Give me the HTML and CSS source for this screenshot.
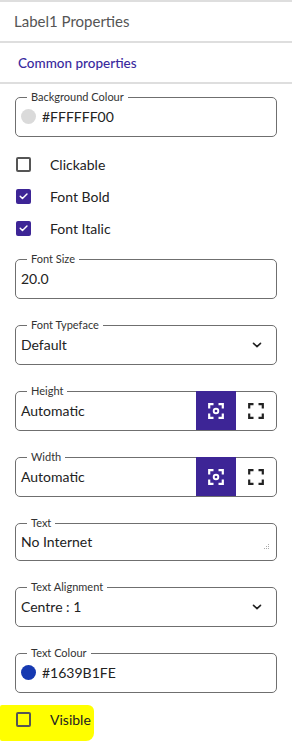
FILE: index.html
```html
<!DOCTYPE html>
<html lang="en">
<head>
  <meta charset="UTF-8">
  <meta name="viewport" content="width=device-width, initial-scale=1.0">
  <title>Label1 Properties</title>
  <link rel="stylesheet" href="styles.css">
</head>
<body>
  <div class="panel">
    <div class="panel-title">Label1 Properties</div>
    <div class="section-title">Common properties</div>

    <div class="props">
      <fieldset class="field">
        <legend>Background Colour</legend>
        <div class="field-row">
          <span class="swatch swatch-clear"></span>
          <span class="value">#FFFFFF00</span>
        </div>
      </fieldset>

      <div class="checks">
        <label class="check-row">
          <span class="box"></span>
          <span>Clickable</span>
        </label>
        <label class="check-row">
          <span class="box checked">
            <svg viewBox="0 0 16 16" width="16" height="16"><path d="M4.5 8.2l2.4 2.4 4.8-4.8" fill="none" stroke="#fff" stroke-width="1.6" stroke-linecap="round" stroke-linejoin="round"/></svg>
          </span>
          <span>Font Bold</span>
        </label>
        <label class="check-row">
          <span class="box checked">
            <svg viewBox="0 0 16 16" width="16" height="16"><path d="M4.5 8.2l2.4 2.4 4.8-4.8" fill="none" stroke="#fff" stroke-width="1.6" stroke-linecap="round" stroke-linejoin="round"/></svg>
          </span>
          <span>Font Italic</span>
        </label>
      </div>

      <fieldset class="field">
        <legend>Font Size</legend>
        <div class="field-row">
          <span class="value">20.0</span>
        </div>
      </fieldset>

      <fieldset class="field">
        <legend>Font Typeface</legend>
        <div class="field-row">
          <span class="value grow">Default</span>
          <svg class="chevron" viewBox="0 0 10 6" width="10" height="6"><path d="M1.5 1.3l3.5 3.3 3.5-3.3" fill="none" stroke="#222" stroke-width="1.6" stroke-linecap="round" stroke-linejoin="round"/></svg>
        </div>
      </fieldset>

      <fieldset class="field">
        <legend>Height</legend>
        <div class="field-row no-right">
          <span class="value grow">Automatic</span>
          <span class="mode active">
            <svg viewBox="0 0 16 16" width="16" height="16"><path d="M1.2 5.5v-4.3h4.3M10.5 1.2h4.3v4.3M14.8 10.5v4.3h-4.3M5.5 14.8h-4.3v-4.3" fill="none" stroke="#fff" stroke-width="2.2"/><circle cx="8" cy="8" r="2.3" fill="none" stroke="#fff" stroke-width="1.9"/></svg>
          </span>
          <span class="mode">
            <svg viewBox="0 0 16 16" width="16" height="16"><path d="M1.2 5.5v-4.3h4.3M10.5 1.2h4.3v4.3M14.8 10.5v4.3h-4.3M5.5 14.8h-4.3v-4.3" fill="none" stroke="#222" stroke-width="2.2"/></svg>
          </span>
        </div>
      </fieldset>

      <fieldset class="field">
        <legend>Width</legend>
        <div class="field-row no-right">
          <span class="value grow">Automatic</span>
          <span class="mode active">
            <svg viewBox="0 0 16 16" width="16" height="16"><path d="M1.2 5.5v-4.3h4.3M10.5 1.2h4.3v4.3M14.8 10.5v4.3h-4.3M5.5 14.8h-4.3v-4.3" fill="none" stroke="#fff" stroke-width="2.2"/><circle cx="8" cy="8" r="2.3" fill="none" stroke="#fff" stroke-width="1.9"/></svg>
          </span>
          <span class="mode">
            <svg viewBox="0 0 16 16" width="16" height="16"><path d="M1.2 5.5v-4.3h4.3M10.5 1.2h4.3v4.3M14.8 10.5v4.3h-4.3M5.5 14.8h-4.3v-4.3" fill="none" stroke="#222" stroke-width="2.2"/></svg>
          </span>
        </div>
      </fieldset>

      <fieldset class="field">
        <legend>Text</legend>
        <div class="field-row text-row">
          <span class="value grow">No Internet</span>
          <svg class="grip" viewBox="0 0 6 6" width="6" height="6"><g fill="#aaa"><rect x="4" y="0" width="1" height="1"/><rect x="2" y="2" width="1" height="1"/><rect x="4" y="2" width="1" height="1"/><rect x="0" y="4" width="1" height="1"/><rect x="2" y="4" width="1" height="1"/><rect x="4" y="4" width="1" height="1"/></g></svg>
        </div>
      </fieldset>

      <fieldset class="field">
        <legend>Text Alignment</legend>
        <div class="field-row">
          <span class="value grow">Centre : 1</span>
          <svg class="chevron" viewBox="0 0 10 6" width="10" height="6"><path d="M1.5 1.3l3.5 3.3 3.5-3.3" fill="none" stroke="#222" stroke-width="1.6" stroke-linecap="round" stroke-linejoin="round"/></svg>
        </div>
      </fieldset>

      <fieldset class="field">
        <legend>Text Colour</legend>
        <div class="field-row">
          <span class="swatch swatch-blue"></span>
          <span class="value">#1639B1FE</span>
        </div>
      </fieldset>

      <label class="check-row highlight">
        <span class="box"></span>
        <span>Visible</span>
      </label>
    </div>
  </div>
</body>
</html>
```

FILE: styles.css
```css
body {
  margin: 0;
  font-family: Lato, "Open Sans", sans-serif;
  color: #222;
  background-color: #fff;
}
.panel {
  width: 292px;
  height: 742px;
  overflow: hidden;
  border-top: 2px solid #dedede;
}
.panel-title {
  height: 39px;
  line-height: 39px;
  padding-left: 14px;
  font-size: 15px;
  color: #555;
  border-bottom: 2px solid #dedede;
}
.section-title {
  height: 39px;
  line-height: 40px;
  padding-left: 18px;
  font-size: 13.5px;
  font-weight: 500;
  color: #3a2a9e;
  border-bottom: 2px solid #dedede;
}
.props {
  padding-top: 7px;
}
.field {
  margin: 0 15px 20px 15px;
  padding: 0 0 0 5px;
  border: 1px solid #6f6f6f;
  border-radius: 5px;
  min-width: 0;
}
.field legend {
  margin-left: 6px;
  padding: 0 4px;
  font-size: 11px;
  line-height: 12px;
  color: #333;
}
.field-row {
  display: flex;
  align-items: center;
  height: 39px;
  margin-top: -6px;
  padding-right: 14px;
}
.field-row.no-right {
  padding-right: 0;
}
.value {
  font-size: 14px;
}
.grow {
  flex: 1;
}
.swatch {
  width: 15px;
  height: 15px;
  border-radius: 50%;
  margin-right: 6px;
}
.swatch-clear {
  background-color: #dadada;
}
.swatch-blue {
  background-color: #1639b1;
}
.chevron {
  display: block;
}
.mode {
  width: 40px;
  align-self: stretch;
  display: flex;
  align-items: center;
  justify-content: center;
}
.mode.active {
  background-color: #3d2596;
}
.text-row {
  height: 37px;
  padding-right: 6px;
}
.grip {
  align-self: flex-end;
  margin-bottom: 10px;
}
.checks {
  margin: -9px 0 9px;
}
.check-row {
  display: flex;
  align-items: center;
  height: 32px;
  padding-left: 16px;
  font-size: 14px;
}
.box {
  width: 15px;
  height: 15px;
  box-sizing: border-box;
  border: 2px solid #555;
  border-radius: 2px;
  margin-right: 19px;
  display: flex;
  align-items: center;
  justify-content: center;
}
.box.checked {
  border: none;
  background-color: #3d2596;
}
.highlight {
  width: 78px;
  height: 28px;
  padding-bottom: 8px;
  margin-top: -8px;
  background-color: #ffff00;
  border-radius: 2px 6px 8px 2px;
}
```
